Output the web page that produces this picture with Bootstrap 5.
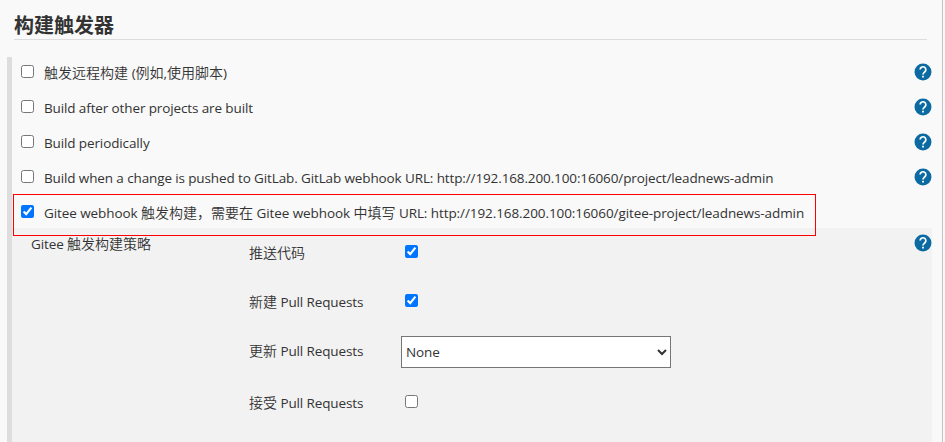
<!DOCTYPE html>
<html lang="zh-CN">
<head>
<meta charset="utf-8">
<meta name="viewport" content="width=device-width, initial-scale=1">
<title>构建触发器</title>
<link rel="stylesheet" href="https://cdn.jsdelivr.net/npm/bootstrap@5.3.0/dist/css/bootstrap.min.css">
<style>
body{font-family:"Open Sans","Noto Sans CJK SC",sans-serif;font-size:14px;line-height:20px;color:#333;background:#f9f9f9;height:442px}
.page{width:943px;height:442px;border-right:1px solid #c4c4c4}
.section-title{font-size:20px;line-height:26px;font-weight:700;margin:0 15px 0 14px;padding-top:13px;height:40px;border-bottom:1px solid #ddd}
.triggers{margin:17px 10px 0 7px;height:385px;border-left:5px solid #ddd;font-weight:350}
.trigger{height:35px;padding:6px 0 0 9px}
.trigger:nth-child(5){height:36px}
input[type=checkbox]{width:13px;height:13px;margin:2px 0 0;flex:none}
.trigger-label{margin-left:10px;white-space:nowrap}
.en{font-size:13.5px;font-weight:400;letter-spacing:-.12px}
.trigger:nth-child(5) .en{letter-spacing:-.08px}
.help{width:18px;height:18px;flex:none;display:block}
.strategy{background:#f2f2f2;height:214px;margin-top:-5px;padding-left:19px}
.strategy .help{margin-top:6px}
.strategy-name{width:218px;padding-top:6px}
.option{height:49px;padding-top:15px}
.option:nth-child(3){height:52px}
.option-name{width:152px;white-space:nowrap}
.option input{margin:2px 0 0 4px}
.option select{width:270px;height:32px;margin-top:-5px;border:1px solid #767676;border-radius:0;background:#fff;color:#333;padding:0}
.highlight{left:13px;top:194px;width:803px;height:42px;border:1px solid #f00;pointer-events:none}
</style>
</head>
<body>
<svg class="d-none"><symbol id="help" viewBox="0 0 24 24"><circle cx="12" cy="12" r="11.3" fill="#0b6aa2"/><path d="M8.2 8.8a3.8 3.8 0 1 1 6.5 2.7C13.3 12.9 12 13.3 12 15.4" fill="none" stroke="#fff" stroke-width="2.3"/><path d="M10.8 17h2.4v2.4h-2.4z" fill="#fff"/></symbol></svg>
<main class="page position-relative overflow-hidden">
<h2 class="section-title">构建触发器</h2>
<div class="triggers">
<div class="trigger d-flex"><input type="checkbox" id="t1"><label class="trigger-label" for="t1">触发远程构建 <span class="en">(</span>例如<span class="en">,</span>使用脚本<span class="en">)</span></label><svg class="help ms-auto"><use href="#help"/></svg></div>
<div class="trigger d-flex"><input type="checkbox" id="t2"><label class="trigger-label" for="t2"><span class="en">Build after other projects are built</span></label><svg class="help ms-auto"><use href="#help"/></svg></div>
<div class="trigger d-flex"><input type="checkbox" id="t3"><label class="trigger-label" for="t3"><span class="en">Build periodically</span></label><svg class="help ms-auto"><use href="#help"/></svg></div>
<div class="trigger d-flex"><input type="checkbox" id="t4"><label class="trigger-label" for="t4"><span class="en">Build when a change is pushed to GitLab. GitLab webhook URL: http://192.168.200.100:16060/project/leadnews-admin</span></label><svg class="help ms-auto"><use href="#help"/></svg></div>
<div class="trigger d-flex"><input type="checkbox" id="t5" checked><label class="trigger-label" for="t5"><span class="en">Gitee webhook </span>触发构建，需要在<span class="en"> Gitee webhook </span>中填写<span class="en"> URL: http://192.168.200.100:16060/gitee-project/leadnews-admin</span></label></div>
<div class="strategy d-flex">
<div class="strategy-name"><span class="en">Gitee </span>触发构建策略</div>
<div class="flex-grow-1">
<div class="option d-flex"><label class="option-name" for="o1">推送代码</label><input type="checkbox" id="o1" checked></div>
<div class="option d-flex"><label class="option-name" for="o2">新建<span class="en"> Pull Requests</span></label><input type="checkbox" id="o2" checked></div>
<div class="option d-flex"><label class="option-name" for="o3">更新<span class="en"> Pull Requests</span></label><select class="en" id="o3"><option>None</option></select></div>
<div class="option d-flex"><label class="option-name" for="o4">接受<span class="en"> Pull Requests</span></label><input type="checkbox" id="o4"></div>
</div>
<svg class="help"><use href="#help"/></svg>
</div>
</div>
<div class="highlight position-absolute"></div>
</main>
<script src="https://cdn.jsdelivr.net/npm/bootstrap@5.3.0/dist/js/bootstrap.bundle.min.js"></script>
</body>
</html>
